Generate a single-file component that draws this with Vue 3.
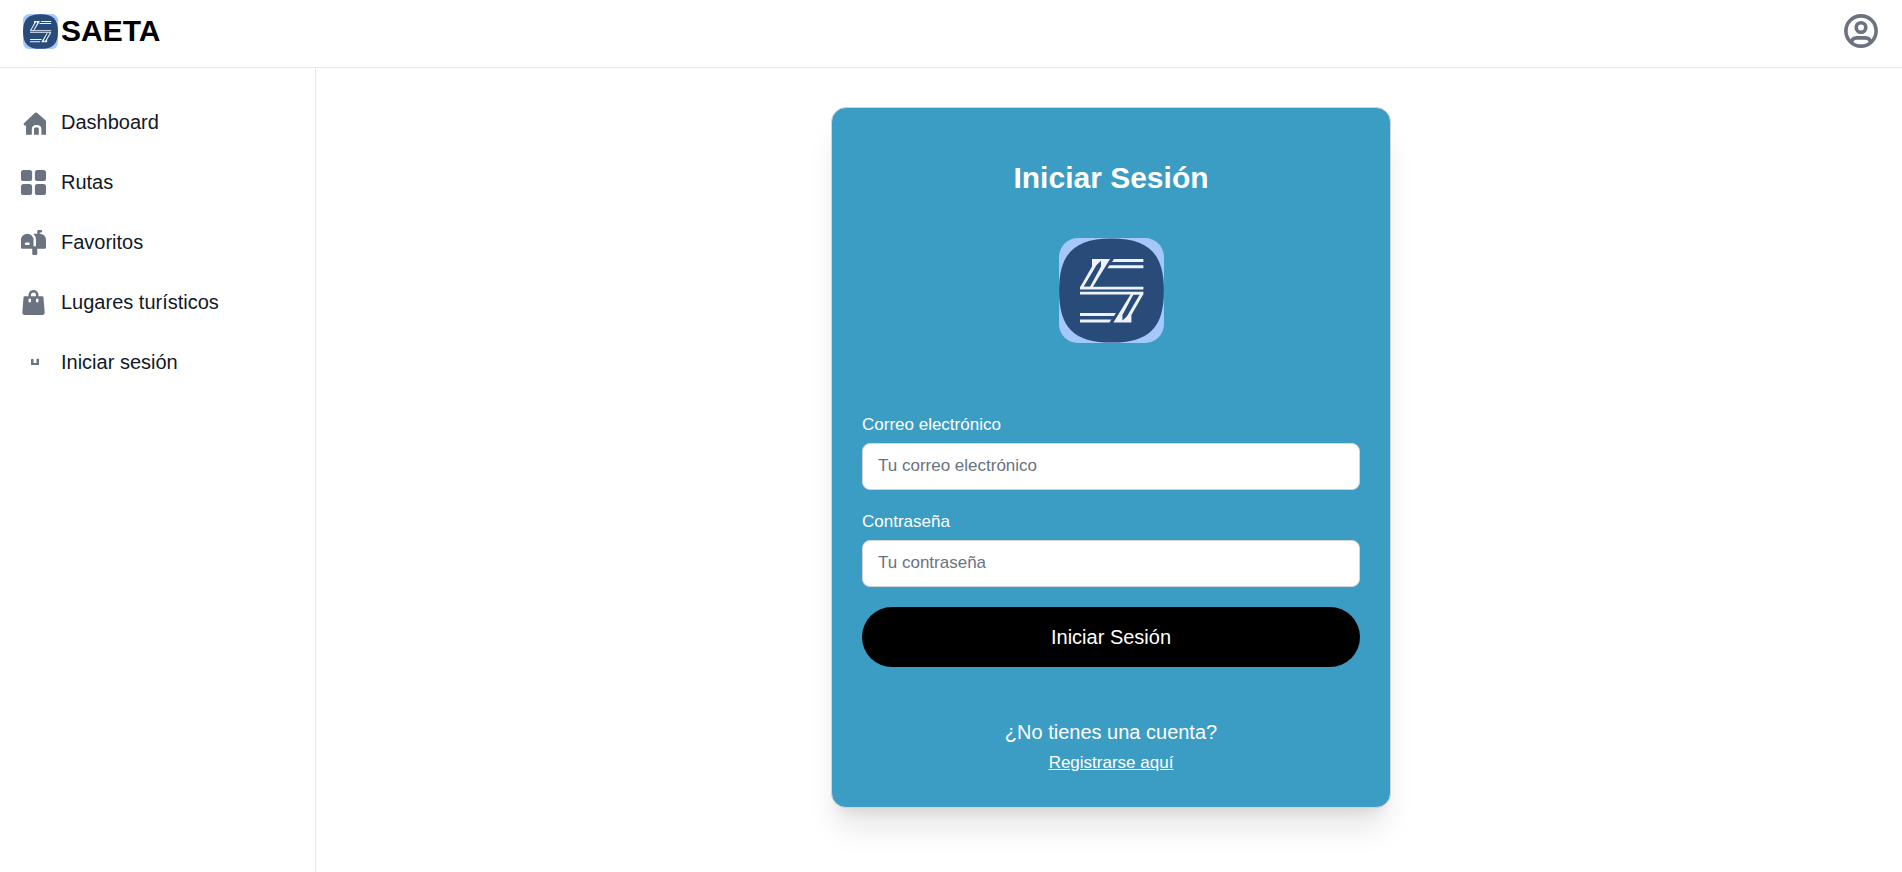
<script setup>
import { ref, h } from 'vue'

const email = ref('')
const password = ref('')

const items = [
  { id: 'home', label: 'Dashboard' },
  { id: 'grid', label: 'Rutas' },
  { id: 'mailbox', label: 'Favoritos' },
  { id: 'bag', label: 'Lugares turísticos' },
  { id: 'login', label: 'Iniciar sesión' },
]

const half = (transform) =>
  h('g', { transform }, [
    h('path', { fill: '#eef3fb', d: 'M55 21H84.4V24H53ZM50.5 27.3H84.4V30.3H48.5ZM21 48.8H84.4V51.6H21Z' }),
    h('path', {
      fill: '#eef3fb',
      'fill-rule': 'evenodd',
      d: 'M33 21H51L33.5 49.5H21L33 28.5ZM37.6 27L42 22.8V28.5L31 48.8H24.6Z',
    }),
  ])

const SaetaLogo = () =>
  h('svg', { viewBox: '0 0 105 105', 'aria-hidden': 'true' }, [
    h('rect', { width: 105, height: 105, rx: 19, fill: '#a5c8fb' }),
    h('path', {
      fill: '#284b7a',
      d: 'M52.5 .5C90 .5 104.9 16 104.9 52.5C104.9 90 90 104.6 52.5 104.6C15 104.6 .1 90 .1 52.5C.1 16 15 .5 52.5 .5Z',
    }),
    half(),
    half('rotate(180 52.7 52.7)'),
  ])
</script>

<template>
  <div class="page">
    <header class="topbar">
      <a class="brand" href="#">
        <SaetaLogo class="brand-logo" />
        <span>SAETA</span>
      </a>
      <button class="account" type="button" aria-label="Cuenta">
        <svg viewBox="0 0 34 34" fill="none" stroke="currentColor" stroke-width="3.6">
          <circle cx="17" cy="17" r="15.1" />
          <circle cx="17" cy="13.5" r="4.8" />
          <path d="M7.200 28.600C8 25.400 9.800 23.900 12.500 23.900H21.500C24.200 23.900 26 25.400 26.800 28.600" />
        </svg>
      </button>
    </header>

    <div class="body">
      <nav class="sidebar">
        <a v-for="item in items" :key="item.id" class="nav-item" href="#">
          <svg v-if="item.id === 'home'" class="icon" viewBox="0 0 25 25">
            <path d="M14 2.800q1-.8 2 0L25 10.800V24.800H20.400V19.500Q20.400 15 16 15H15.200Q10.800 15 10.800 19.500V24.800H5V15.500H3.200Q2 14.200 3 13.200Z" />
            <path d="M13 24.800V19Q13 17.600 14.400 17.600H16.400Q17.800 17.600 17.800 19V24.800Z" />
          </svg>
          <svg v-else-if="item.id === 'grid'" class="icon" viewBox="0 0 18 18">
            <rect width="8" height="8" rx="1.857" />
            <rect x="10" width="8" height="8" rx="1.857" />
            <rect y="10" width="8" height="8" rx="1.857" />
            <rect x="10" y="10" width="8" height="8" rx="1.857" />
          </svg>
          <svg v-else-if="item.id === 'mailbox'" class="icon" viewBox="0 0 20 20">
            <path d="m17.418 3.623-.018-.008a6.713 6.713 0 0 0-2.4-.569V2h1a1 1 0 1 0 0-2h-2a1 1 0 0 0-1 1v2H9.890A6.977 6.977 0 0 1 12 8v5h-2V8A5 5 0 1 0 0 8v6a1 1 0 0 0 1 1h8v4a1 1 0 0 0 1 1h2a1 1 0 0 0 1-1v-4h6a1 1 0 0 0 1-1V8a5 5 0 0 0-2.582-4.377ZM6 12H4a1 1 0 0 1 0-2h2a1 1 0 0 1 0 2Z" />
          </svg>
          <svg v-else-if="item.id === 'bag'" class="icon" viewBox="0 0 18 20">
            <path d="M17 5.923A1 1 0 0 0 16 5h-3V4a4 4 0 1 0-8 0v1H2a1 1 0 0 0-1 .923L.086 17.846A2 2 0 0 0 2.080 20h13.840a2 2 0 0 0 1.994-2.153L17 5.923ZM7 9a1 1 0 0 1-2 0V7h2v2Zm0-5a2 2 0 1 1 4 0v1H7V4Zm6 5a1 1 0 1 1-2 0V7h2v2Z" />
          </svg>
          <svg v-else class="icon" viewBox="0 0 25 25">
            <path d="M10 9.200L12.500 8.800V13H15.500V8.800H18V15H10Z" />
          </svg>
          <span>{{ item.label }}</span>
        </a>
      </nav>

      <main class="content">
        <form class="card" @submit.prevent>
          <h1>Iniciar Sesión</h1>
          <SaetaLogo class="card-logo" />
          <div class="field">
            <label for="email">Correo electrónico</label>
            <input id="email" v-model="email" type="email" placeholder="Tu correo electrónico" />
          </div>
          <div class="field">
            <label for="password">Contraseña</label>
            <input id="password" v-model="password" type="password" placeholder="Tu contraseña" />
          </div>
          <button class="submit" type="submit">Iniciar Sesión</button>
          <p class="register">¿No tienes una cuenta?</p>
          <a class="register-link" href="#">Registrarse aquí</a>
        </form>
      </main>
    </div>
  </div>
</template>

<style>
body {
  margin: 0;
  background: #fff;
}
</style>

<style scoped>
.page {
  display: flex;
  flex-direction: column;
  min-height: 100vh;
  font-family: "Liberation Sans", Arial, sans-serif;
  font-size: 20px;
  line-height: 30px;
  color: #111827;
}

.page * {
  box-sizing: border-box;
}

.topbar {
  display: flex;
  align-items: center;
  justify-content: space-between;
  padding: 11px 24px 16px 23px;
  border-bottom: 1px solid #e5e7eb;
}

.brand {
  display: flex;
  align-items: center;
  gap: 3px;
  color: #000;
  font-size: 30px;
  font-weight: 700;
  line-height: 40px;
  text-decoration: none;
}

.brand-logo {
  width: 35px;
  height: 35px;
}

.account {
  display: flex;
  padding: 0;
  border: 0;
  background: none;
  color: #6b7280;
  cursor: pointer;
}

.account svg {
  width: 34px;
  height: 34px;
}

.body {
  display: flex;
  flex: 1;
}

.sidebar {
  display: flex;
  flex-direction: column;
  gap: 10px;
  width: 316px;
  flex-shrink: 0;
  padding: 29px 11px;
  border-right: 1px solid #e5e7eb;
}

.nav-item {
  display: flex;
  align-items: center;
  gap: 15px;
  padding: 10px;
  color: #111827;
  text-decoration: none;
}

.icon {
  width: 25px;
  height: 25px;
  fill: #6b7280;
}

.content {
  display: flex;
  flex: 1;
  align-items: flex-start;
  justify-content: center;
  padding: 39px 0 40px 4px;
}

.card {
  display: flex;
  flex-direction: column;
  width: 100%;
  max-width: 560px;
  padding: 50px 30px 29px;
  border: 1px solid #d1d5db;
  border-radius: 15px;
  background: #3b9dc3;
  color: #fff;
  box-shadow: 0 25px 31px -6px rgb(0 0 0 / 0.1), 0 10px 13px -8px rgb(0 0 0 / 0.1);
}

h1 {
  margin: 0;
  font-size: 30px;
  line-height: 40px;
  text-align: center;
}

.card-logo {
  align-self: center;
  width: 105px;
  height: 105px;
  margin: 40px 0 72px;
}

.field {
  display: flex;
  flex-direction: column;
  gap: 8px;
  margin-bottom: 22px;
}

.field + .submit {
  margin-top: -2px;
}

label {
  font-size: 17px;
  line-height: 20px;
}

input {
  width: 100%;
  height: 47px;
  padding: 0 15px 1px;
  border: 1px solid #d1d5db;
  border-radius: 8px;
  background: #fff;
  color: #111827;
  font-family: inherit;
  font-size: 17px;
}

input::placeholder {
  color: #6b7280;
}

.submit {
  padding: 15px 20px;
  border: 0;
  border-radius: 30px;
  background: #000;
  color: #fff;
  font-family: inherit;
  font-size: 20px;
  line-height: 30px;
  cursor: pointer;
}

.register {
  margin: 50px 0 0;
  text-align: center;
}

.register-link {
  align-self: center;
  margin-top: 1px;
  color: #fff;
  font-size: 17px;
}
</style>
